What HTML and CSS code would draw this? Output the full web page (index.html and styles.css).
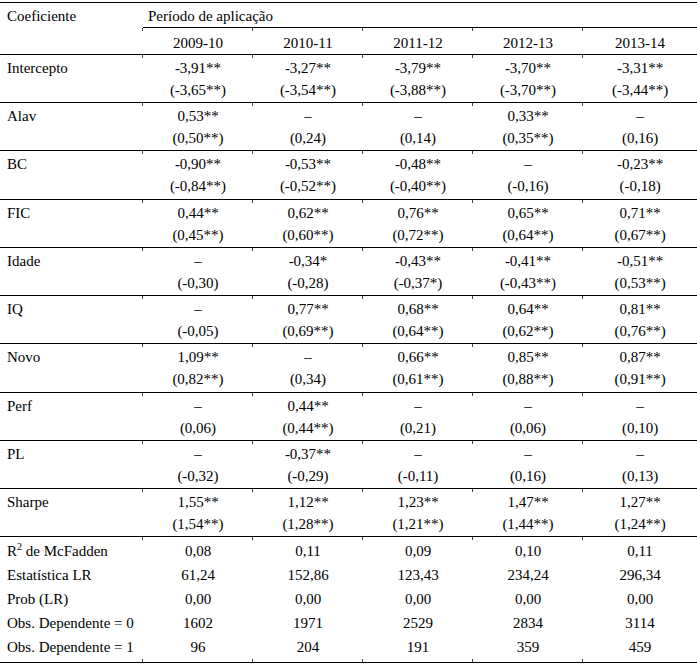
FILE: index.html
```html
<!DOCTYPE html>
<html lang="pt">
<head>
<meta charset="utf-8">
<title>Coeficientes</title>
<link rel="stylesheet" href="styles.css">
</head>
<body>
<table class="tbl">
  <colgroup>
    <col class="c-name"><col class="c-val"><col class="c-val"><col class="c-val"><col class="c-val"><col class="c-last">
  </colgroup>
  <tr class="h1">
    <td class="name">Coeficiente</td>
    <td class="periodo" colspan="5">Período de aplicação</td>
  </tr>
  <tr class="h2">
    <td class="name"></td>
    <td class="tk">2009-10</td><td class="tk">2010-11</td><td class="tk">2011-12</td><td class="tk">2012-13</td><td class="tk">2013-14</td>
  </tr>

  <tr class="g1"><td class="name">Intercepto</td><td class="tk">-3,91**</td><td class="tk">-3,27**</td><td class="tk">-3,79**</td><td class="tk">-3,70**</td><td class="tk">-3,31**</td></tr>
  <tr class="g2"><td class="name"></td><td>(-3,65**)</td><td>(-3,54**)</td><td>(-3,88**)</td><td>(-3,70**)</td><td>(-3,44**)</td></tr>

  <tr class="g1"><td class="name">Alav</td><td class="tk">0,53**</td><td class="tk">–</td><td class="tk">–</td><td class="tk">0,33**</td><td class="tk">–</td></tr>
  <tr class="g2"><td class="name"></td><td>(0,50**)</td><td>(0,24)</td><td>(0,14)</td><td>(0,35**)</td><td>(0,16)</td></tr>

  <tr class="g1"><td class="name">BC</td><td class="tk">-0,90**</td><td class="tk">-0,53**</td><td class="tk">-0,48**</td><td class="tk">–</td><td class="tk">-0,23**</td></tr>
  <tr class="g2 tall"><td class="name"></td><td>(-0,84**)</td><td>(-0,52**)</td><td>(-0,40**)</td><td>(-0,16)</td><td>(-0,18)</td></tr>

  <tr class="g1"><td class="name">FIC</td><td class="tk">0,44**</td><td class="tk">0,62**</td><td class="tk">0,76**</td><td class="tk">0,65**</td><td class="tk">0,71**</td></tr>
  <tr class="g2"><td class="name"></td><td>(0,45**)</td><td>(0,60**)</td><td>(0,72**)</td><td>(0,64**)</td><td>(0,67**)</td></tr>

  <tr class="g1"><td class="name">Idade</td><td class="tk">–</td><td class="tk">-0,34*</td><td class="tk">-0,43**</td><td class="tk">-0,41**</td><td class="tk">-0,51**</td></tr>
  <tr class="g2"><td class="name"></td><td>(-0,30)</td><td>(-0,28)</td><td>(-0,37*)</td><td>(-0,43**)</td><td>(0,53**)</td></tr>

  <tr class="g1"><td class="name">IQ</td><td class="tk">–</td><td class="tk">0,77**</td><td class="tk">0,68**</td><td class="tk">0,64**</td><td class="tk">0,81**</td></tr>
  <tr class="g2"><td class="name"></td><td>(-0,05)</td><td>(0,69**)</td><td>(0,64**)</td><td>(0,62**)</td><td>(0,76**)</td></tr>

  <tr class="g1"><td class="name">Novo</td><td class="tk">1,09**</td><td class="tk">–</td><td class="tk">0,66**</td><td class="tk">0,85**</td><td class="tk">0,87**</td></tr>
  <tr class="g2 tall"><td class="name"></td><td>(0,82**)</td><td>(0,34)</td><td>(0,61**)</td><td>(0,88**)</td><td>(0,91**)</td></tr>

  <tr class="g1"><td class="name">Perf</td><td class="tk">–</td><td class="tk">0,44**</td><td class="tk">–</td><td class="tk">–</td><td class="tk">–</td></tr>
  <tr class="g2"><td class="name"></td><td>(0,06)</td><td>(0,44**)</td><td>(0,21)</td><td>(0,06)</td><td>(0,10)</td></tr>

  <tr class="g1"><td class="name">PL</td><td class="tk">–</td><td class="tk">-0,37**</td><td class="tk">–</td><td class="tk">–</td><td class="tk">–</td></tr>
  <tr class="g2"><td class="name"></td><td>(-0,32)</td><td>(-0,29)</td><td>(-0,11)</td><td>(0,16)</td><td>(0,13)</td></tr>

  <tr class="g1"><td class="name">Sharpe</td><td class="tk">1,55**</td><td class="tk">1,12**</td><td class="tk">1,23**</td><td class="tk">1,47**</td><td class="tk">1,27**</td></tr>
  <tr class="g2"><td class="name"></td><td>(1,54**)</td><td>(1,28**)</td><td>(1,21**)</td><td>(1,44**)</td><td>(1,24**)</td></tr>

  <tr class="s s-first"><td class="name">R<sup>2</sup> de McFadden</td><td class="tk">0,08</td><td class="tk">0,11</td><td class="tk">0,09</td><td class="tk">0,10</td><td class="tk">0,11</td></tr>
  <tr class="s"><td class="name">Estatística LR</td><td>61,24</td><td>152,86</td><td>123,43</td><td>234,24</td><td>296,34</td></tr>
  <tr class="s"><td class="name">Prob (LR)</td><td>0,00</td><td>0,00</td><td>0,00</td><td>0,00</td><td>0,00</td></tr>
  <tr class="s"><td class="name">Obs. Dependente = 0</td><td>1602</td><td>1971</td><td>2529</td><td>2834</td><td>3114</td></tr>
  <tr class="s s-last"><td class="name">Obs. Dependente = 1</td><td class="tb">96</td><td class="tb">204</td><td class="tb">191</td><td class="tb">359</td><td class="tb">459</td></tr>
</table>
</body>
</html>
```

FILE: styles.css
```css
html, body {
  margin: 0;
  padding: 0;
  background: #fff;
}

body {
  font-family: "Liberation Serif", "Times New Roman", serif;
  font-size: 15px;
  color: #000;
}

.tbl {
  width: 697px;
  margin-top: 2px;
  border-collapse: separate;
  border-spacing: 0;
  table-layout: fixed;
  font-family: "Liberation Serif", "Times New Roman", serif;
  font-size: 15px;
}

.c-name { width: 143px; }
.c-val { width: 110px; }
.c-last { width: 114px; }

.tbl td {
  padding: 0;
  line-height: 22px;
  text-align: center;
  vertical-align: top;
  white-space: nowrap;
}

.tbl td.name {
  text-align: left;
  padding-left: 7px;
}

/* header */
.h1 td {
  border-top: 1px solid #000;
  padding-top: 2px;
}

.h1 td.periodo {
  text-align: left;
  padding-left: 5px;
  border-bottom: 1px solid #000;
}

.h2 td {
  padding-top: 4px;
}

/* coefficient groups */
.g1 td {
  border-top: 1px solid #000;
  padding-top: 2px;
}

.g2 td {
  padding-bottom: 1px;
}

.g2.tall td {
  padding-bottom: 2px;
}

/* statistics */
.s td {
  line-height: 24px;
}

.s-first td {
  border-top: 1px solid #000;
  padding-top: 2px;
}

.s-last td {
  border-bottom: 1px solid #000;
  padding-bottom: 3px;
}

sup {
  font-size: 10px;
  line-height: 0;
  vertical-align: 6px;
}

/* little column ticks where rules meet the column boundaries */
.tk, .tb {
  position: relative;
}

.tk::before {
  content: "";
  position: absolute;
  left: -1px;
  top: 0;
  width: 1px;
  height: 3px;
  background: #444;
}

.tb::after {
  content: "";
  position: absolute;
  left: -1px;
  bottom: 0;
  width: 1px;
  height: 3px;
  background: #444;
}
```
